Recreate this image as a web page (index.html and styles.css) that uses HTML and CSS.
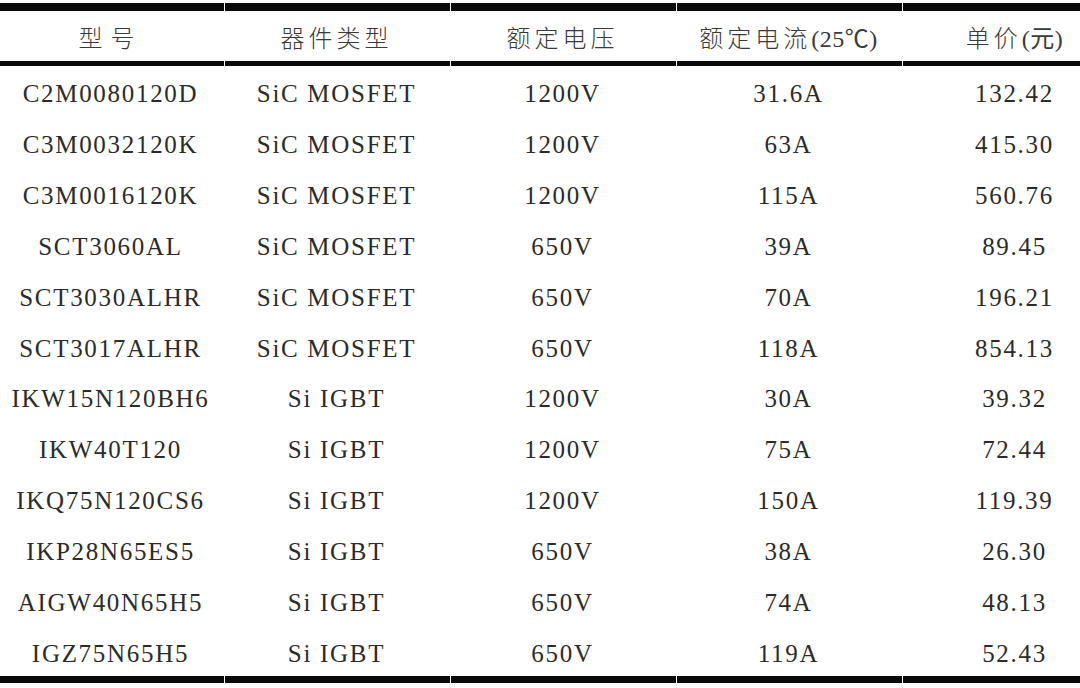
FILE: index.html
```html
<!DOCTYPE html>
<html lang="zh">
<head>
<meta charset="utf-8">
<title>器件价格表</title>
<link rel="stylesheet" href="styles.css">
</head>
<body>
<div class="table">
  <div class="th"><span class="wide">型号</span></div>
  <div class="th">器件类型</div>
  <div class="th">额定电压</div>
  <div class="th">额定电流<span class="latin">(25℃)</span></div>
  <div class="th">单价<span class="latin">(元)</span></div>

  <div class="td">C2M0080120D</div><div class="td">SiC MOSFET</div><div class="td">1200V</div><div class="td">31.6A</div><div class="td">132.42</div>
  <div class="td">C3M0032120K</div><div class="td">SiC MOSFET</div><div class="td">1200V</div><div class="td">63A</div><div class="td">415.30</div>
  <div class="td">C3M0016120K</div><div class="td">SiC MOSFET</div><div class="td">1200V</div><div class="td">115A</div><div class="td">560.76</div>
  <div class="td">SCT3060AL</div><div class="td">SiC MOSFET</div><div class="td">650V</div><div class="td">39A</div><div class="td">89.45</div>
  <div class="td">SCT3030ALHR</div><div class="td">SiC MOSFET</div><div class="td">650V</div><div class="td">70A</div><div class="td">196.21</div>
  <div class="td">SCT3017ALHR</div><div class="td">SiC MOSFET</div><div class="td">650V</div><div class="td">118A</div><div class="td">854.13</div>
  <div class="td">IKW15N120BH6</div><div class="td">Si IGBT</div><div class="td">1200V</div><div class="td">30A</div><div class="td">39.32</div>
  <div class="td">IKW40T120</div><div class="td">Si IGBT</div><div class="td">1200V</div><div class="td">75A</div><div class="td">72.44</div>
  <div class="td">IKQ75N120CS6</div><div class="td">Si IGBT</div><div class="td">1200V</div><div class="td">150A</div><div class="td">119.39</div>
  <div class="td">IKP28N65ES5</div><div class="td">Si IGBT</div><div class="td">650V</div><div class="td">38A</div><div class="td">26.30</div>
  <div class="td">AIGW40N65H5</div><div class="td">Si IGBT</div><div class="td">650V</div><div class="td">74A</div><div class="td">48.13</div>
  <div class="td last">IGZ75N65H5</div><div class="td last">Si IGBT</div><div class="td last">650V</div><div class="td last">119A</div><div class="td last">52.43</div>
</div>
</body>
</html>
```
FILE: styles.css
```css
html, body {
  margin: 0;
  padding: 0;
  background: #ffffff;
  overflow: hidden;
}

body {
  width: 1080px;
  height: 688px;
  font-family: "Liberation Serif", "Noto Sans CJK SC", serif;
  color: #2b2b2b;
}

.table {
  display: grid;
  grid-template-columns: repeat(5, 225px);
  grid-template-rows: 63px repeat(11, 50.83px) 57.83px;
  column-gap: 1px;
  margin-top: 3px;
  margin-left: -1px;
  width: 1129px;
}

.th {
  border-top: 8px solid #0a0a0a;
  border-bottom: 5px solid #0a0a0a;
  display: flex;
  align-items: center;
  justify-content: center;
  font-size: 24px;
  font-weight: 300;
  letter-spacing: 4px;
  color: #3a3a3a;
  box-sizing: border-box;
  white-space: nowrap;
  padding-right: 2px;
}

.wide {
  letter-spacing: 8px;
}

.latin {
  letter-spacing: 0.5px;
  font-weight: 400;
}

.td {
  display: flex;
  align-items: center;
  justify-content: center;
  font-size: 25px;
  letter-spacing: 1.7px;
  padding-top: 6px;
  padding-right: 2px;
  box-sizing: border-box;
  white-space: nowrap;
}

.td.last {
  border-bottom: 7px solid #0a0a0a;
}
```
